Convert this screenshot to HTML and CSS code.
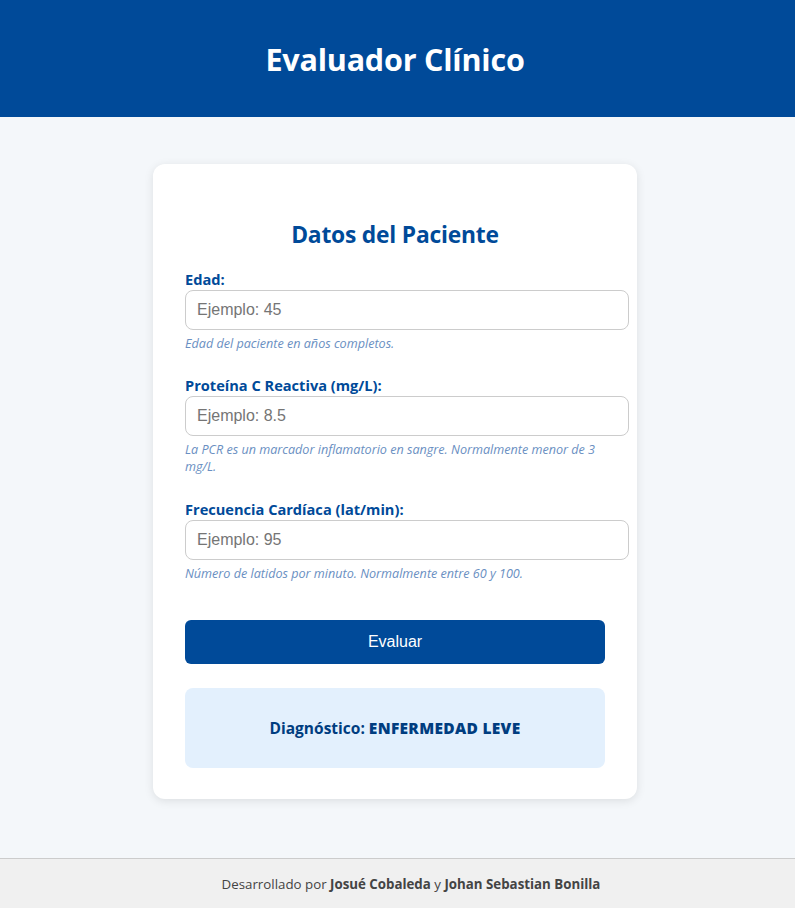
FILE: index.html
```html
<!DOCTYPE html>
<html lang="es">
<head>
<meta charset="utf-8">
<title>Evaluador Clínico</title>
<link rel="stylesheet" href="styles.css">
</head>
<body>
<header class="topbar">
  <h1 class="title">Evaluador Clínico</h1>
</header>
<main class="main">
  <section class="card">
    <h2 class="card-title">Datos del Paciente</h2>
    <form class="form">
      <div class="field">
        <label class="label" for="edad">Edad:</label>
        <input class="input" id="edad" type="text" placeholder="Ejemplo: 45">
        <p class="help">Edad del paciente en años completos.</p>
      </div>
      <div class="field">
        <label class="label" for="pcr">Proteína C Reactiva (mg/L):</label>
        <input class="input" id="pcr" type="text" placeholder="Ejemplo: 8.5">
        <p class="help">La PCR es un marcador inflamatorio en sangre. Normalmente menor de 3 mg/L.</p>
      </div>
      <div class="field">
        <label class="label" for="fc">Frecuencia Cardíaca (lat/min):</label>
        <input class="input" id="fc" type="text" placeholder="Ejemplo: 95">
        <p class="help">Número de latidos por minuto. Normalmente entre 60 y 100.</p>
      </div>
      <button class="button" type="button">Evaluar</button>
    </form>
    <div class="result"><p class="result-text">Diagnóstico: <strong class="result-value">ENFERMEDAD LEVE</strong></p></div>
  </section>
</main>
<footer class="footer">
  <p class="footer-text">Desarrollado por <strong>Josué Cobaleda</strong> y <strong>Johan Sebastian Bonilla</strong></p>
</footer>
</body>
</html>
```

FILE: styles.css
```css
* { box-sizing: border-box; }
html, body { margin: 0; padding: 0; }
body {
  font-family: "Open Sans", "Noto Sans", sans-serif;
  background: #f4f7fa;
  color: #222;
}
.topbar {
  background: #004a99;
  height: 117px;
  padding-right: 5px;
  display: flex;
  align-items: center;
  justify-content: center;
}
.title {
  margin: 0;
  color: #fff;
  font-size: 30.5px;
  font-weight: 700;
  line-height: 40px;
  letter-spacing: -0.2px;
}
.main {
  padding: 47px 5px 59px 0;
  display: flex;
  justify-content: center;
}
.card {
  width: 484px;
  background: #fff;
  border-radius: 12px;
  box-shadow: 0 2px 10px rgba(0, 0, 0, 0.1);
  padding: 32px 32px 31px;
}
.card-title {
  margin: 23px 0 18px;
  text-align: center;
  color: #004a99;
  font-size: 22.8px;
  line-height: 32px;
  font-weight: 700;
  letter-spacing: -0.2px;
}
.form { display: flex; flex-direction: column; }
.field { margin-bottom: 24px; }
.field:first-child { margin-bottom: 23px; }
.field:last-of-type { margin-bottom: 38px; }
.label {
  display: block;
  color: #004a99;
  font-weight: 700;
  font-size: 14.6px;
  line-height: 21px;
}
.input {
  display: block;
  width: 444px;
  height: 40px;
  padding: 10px 11px;
  border: 1px solid #ccc;
  border-radius: 8px;
  font-family: "Liberation Sans", Arial, sans-serif;
  font-size: 16px;
  color: #333;
  background: #fff;
}
.input::placeholder { color: #757575; }
.help {
  margin: 5px 0 0;
  font-size: 12.6px;
  line-height: 17px;
  font-style: italic;
  color: #6a8fc2;
}
.button {
  height: 44px;
  width: 100%;
  border: none;
  border-radius: 6px;
  background: #004a99;
  color: #fff;
  font-family: "Liberation Sans", Arial, sans-serif;
  font-size: 16px;
}
.result {
  margin-top: 24px;
  height: 80px;
  border-radius: 8px;
  background: #e3f0fd;
  display: flex;
  align-items: center;
  justify-content: center;
}
.result-text {
  margin: 0;
  color: #003d80;
  font-weight: 700;
  font-size: 15.5px;
}
.result-value { font-weight: 800; letter-spacing: 0.3px; }
.footer {
  border-top: 1px solid #ccc;
  background: #f0f0f0;
  height: 50px;
  padding-left: 27px;
  display: flex;
  align-items: center;
  justify-content: center;
}
.footer-text {
  margin: 0;
  font-size: 13.3px;
  color: #444;
}
.footer-text strong { font-weight: 700; }
```
